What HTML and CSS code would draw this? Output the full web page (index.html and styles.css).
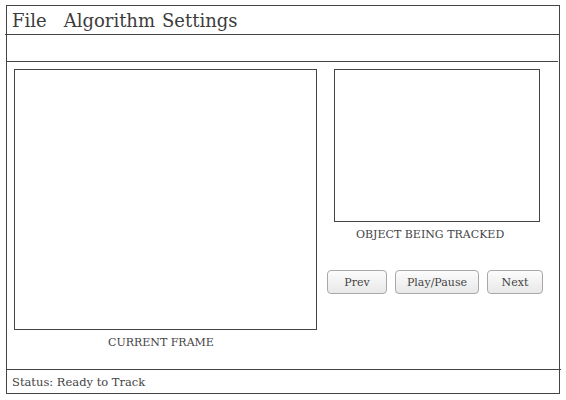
FILE: index.html
```html
<!DOCTYPE html>
<html>
<head>
<meta charset="utf-8">
<link rel="stylesheet" href="styles.css">
</head>
<body>
<div class="window">
  <div class="menubar">
    <span class="menu-item">File</span>
    <span class="menu-item">Algorithm</span>
    <span class="menu-item">Settings</span>
  </div>
  <div class="toolbar"></div>
  <div class="main">
    <div class="left-col">
      <div class="frame-box current"></div>
      <div class="caption current-caption">CURRENT FRAME</div>
    </div>
    <div class="right-col">
      <div class="frame-box tracked"></div>
      <div class="caption tracked-caption">OBJECT BEING TRACKED</div>
      <div class="buttons">
        <button class="btn btn-prev">Prev</button>
        <button class="btn btn-play">Play/Pause</button>
        <button class="btn btn-next">Next</button>
      </div>
    </div>
  </div>
  <div class="status">Status: Ready to Track</div>
</div>
</body>
</html>
```
FILE: styles.css
```css
html, body {
  margin: 0;
  padding: 0;
  background: #fff;
}
body {
  font-family: "DejaVu Serif", serif;
  color: #444;
}
.window {
  margin: 5px 0 0 6px;
  width: 554px;
  height: 389px;
  box-sizing: border-box;
  border: 1px solid #444;
  display: flex;
  flex-direction: column;
}
.menubar {
  height: 28px;
  border-bottom: 1px solid #444;
  margin-left: -2px;
  padding-left: 7px;
  display: flex;
  align-items: center;
  font-size: 18px;
  color: #3c3c3c;
}
.menu-item {
  margin-right: 7px;
}
.menu-item:first-child {
  margin-right: 17px;
}
.toolbar {
  height: 26px;
  border-bottom: 1px solid #444;
  margin-right: 1px;
}
.main {
  flex: 1;
  display: flex;
  padding: 7px 0 0 7px;
}
.left-col {
  width: 303px;
  display: flex;
  flex-direction: column;
}
.frame-box {
  box-sizing: border-box;
  border: 1px solid #444;
}
.current {
  width: 303px;
  height: 261px;
}
.caption {
  font-size: 11px;
  line-height: 13px;
  margin-top: 6px;
  color: #444;
}
.current-caption {
  margin-left: 94px;
}
.right-col {
  margin-left: 10px;
  width: 217px;
  display: flex;
  flex-direction: column;
}
.tracked {
  margin-left: 7px;
  width: 206px;
  height: 153px;
}
.tracked-caption {
  margin-left: 29px;
}
.buttons {
  display: flex;
  gap: 8px;
  margin-top: 29px;
}
.btn {
  height: 24px;
  box-sizing: border-box;
  border: 1px solid #a8a8a8;
  border-radius: 4px;
  background: linear-gradient(#fcfcfc, #e8e8e8);
  font-family: "DejaVu Serif", serif;
  font-size: 11px;
  color: #444;
  padding: 0;
}
.btn-prev { width: 60px; }
.btn-play { width: 84px; }
.btn-next { width: 56px; }
.status {
  height: 24px;
  box-sizing: border-box;
  border-top: 1px solid #444;
  margin-right: -2px;
  padding-left: 5px;
  display: flex;
  align-items: center;
  font-size: 11.5px;
  color: #444;
}
```
